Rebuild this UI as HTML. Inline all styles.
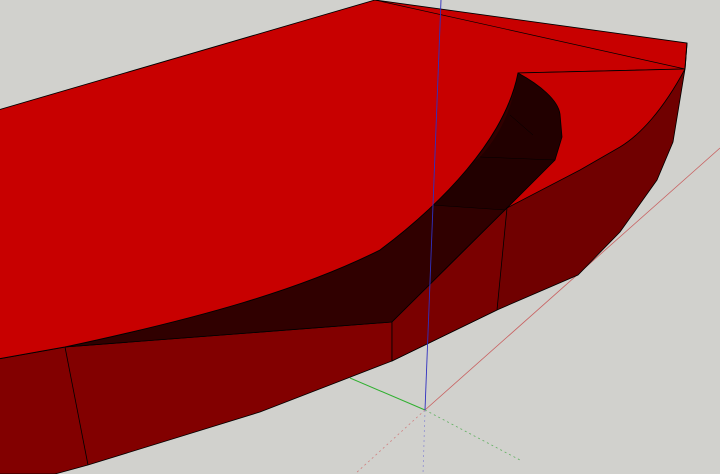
<!DOCTYPE html>
<html><head><style>html,body{margin:0;padding:0;background:#d1d1cd;overflow:hidden}svg{display:block}</style></head>
<body>
<svg width="720" height="474" viewBox="0 0 720 474" xmlns="http://www.w3.org/2000/svg">
<rect width="720" height="474" fill="#d1d1cd"/>
<line x1="425" y1="410" x2="720" y2="148" stroke="#c86060" stroke-width="0.8"/>
<line x1="350" y1="378" x2="425" y2="410" stroke="#30b030" stroke-width="1"/>
<line x1="425" y1="410" x2="355" y2="474" stroke="#d08080" stroke-width="0.8" stroke-dasharray="2,3"/>
<line x1="425" y1="410" x2="520" y2="460" stroke="#60b060" stroke-width="0.8" stroke-dasharray="2,3"/>
<line x1="425" y1="410" x2="423" y2="474" stroke="#9090d0" stroke-width="0.8" stroke-dasharray="2,3"/>
<polygon points="-2,359 65,347 392,322 392,361 260,412 88,465 55,474 -2,474" fill="#820000" stroke="#000" stroke-width="0.8"/>
<line x1="65" y1="347" x2="88" y2="465" stroke="#000" stroke-width="0.8"/>
<path d="M518,73 C540,85 558,100 560,114 L562,137 L555,160 L505,210 L392,322 L65,347 C200,318 300,290 380,250 C440,205 505,140 518,73 Z" fill="#300000" stroke="#000" stroke-width="0.8"/>
<path d="M518,73 C540,85 558,100 560,114 L562,137 L555,160 L505,210 L417,204 L480,157 C500,135 512,110 518,73 Z" fill="#220000"/>
<line x1="417" y1="204" x2="505" y2="210" stroke="#000" stroke-width="0.5"/>
<line x1="480" y1="157" x2="555" y2="160" stroke="#000" stroke-width="0.5"/>
<line x1="510" y1="115" x2="533" y2="135" stroke="#000" stroke-width="0.5"/>
<path d="M-2,110 L375,0 L687,43 L685,69 L518,73 C505,140 440,205 380,250 C300,290 200,318 65,347 L-2,359 Z" fill="#c80000" stroke="#000" stroke-width="0.9"/>
<path d="M518,73 L685,69 C663,110 640,135 620,147 L580,170 L507,208 L555,160 L562,137 L560,114 C558,100 540,85 518,73 Z" fill="#c80000"/>
<path d="M518,73 C540,85 558,100 560,114 L562,137 L555,160 L507,208" fill="none" stroke="#000" stroke-width="0.8"/>
<path d="M685,69 L673,142 L657,180 L620,232 L578,275 L497,310 L392,361 L392,322 L507,208 L580,170 L620,147 C640,135 663,110 685,69 Z" fill="#700000" stroke="#000" stroke-width="0.8"/>
<polygon points="392,322 507,208 497,310 392,361" fill="#7a0000" stroke="#000" stroke-width="0.8"/>
<line x1="375" y1="0" x2="685" y2="69" stroke="#000" stroke-width="0.7"/>
<line x1="518" y1="73" x2="685" y2="69" stroke="#000" stroke-width="0.8"/>
<line x1="687" y1="43" x2="685" y2="69" stroke="#000" stroke-width="1"/>
<line x1="441" y1="0" x2="425" y2="410" stroke="#3030c0" stroke-width="0.9"/>
</svg>
</body></html>
